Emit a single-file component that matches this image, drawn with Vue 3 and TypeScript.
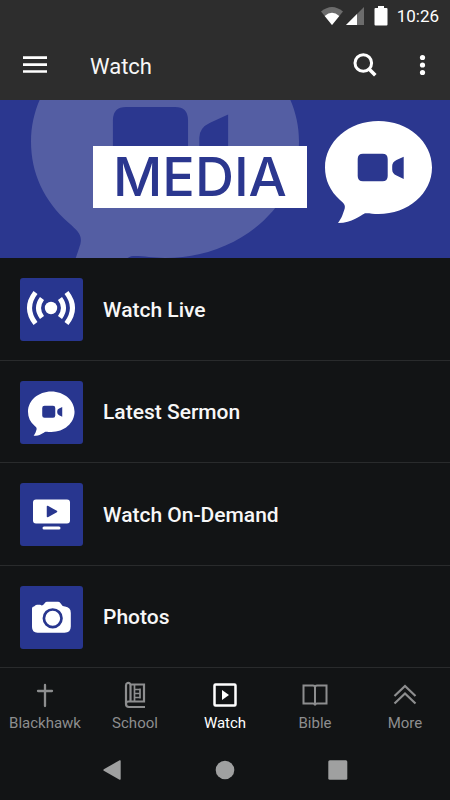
<script setup lang="ts">
import { ref } from 'vue'

type IconName = 'live' | 'sermon' | 'demand' | 'photos'
type TabName = 'Blackhawk' | 'School' | 'Watch' | 'Bible' | 'More'

interface MediaItem {
  label: string
  icon: IconName
}

const items: MediaItem[] = [
  { label: 'Watch Live', icon: 'live' },
  { label: 'Latest Sermon', icon: 'sermon' },
  { label: 'Watch On-Demand', icon: 'demand' },
  { label: 'Photos', icon: 'photos' },
]

const tabs: TabName[] = ['Blackhawk', 'School', 'Watch', 'Bible', 'More']
const activeTab = ref<TabName>('Watch')

// Speech bubble with a camera cut out of it, on a 107 x 102 canvas
const bubble =
  'M53.5 0C83 0 107 20.5 107 46.5S83 93 53.5 93C48 93 44 92 40 92.3C34 95 28 102 13 102C17 97 18.500 91 19.700 87.500C20.500 84 19 82.500 15 79C5 70 0 59 0 46.500C0 20.500 24 0 53.500 0Z' +
  'M38 32.700Q32.700 32.700 32.700 38V55Q32.700 60.300 38 60.300H57.500Q62.700 60.300 62.700 55V38Q62.700 32.700 57.500 32.700Z' +
  'M78.700 35.700L71.500 39Q67.200 41 67.200 45V48.500Q67.200 52.500 71.500 54.500L78.700 58Z'
</script>

<template>
  <div class="screen">
    <header class="header">
      <div class="status">
        <svg class="wifi" width="24" height="20" viewBox="0 0 24 20" aria-hidden="true">
          <path d="M1 5.500Q12-3.500 23 5.500L12 19Z" fill="#6c6c6c" />
          <path d="M4.700 10Q12 3.500 19.300 10L12 19Z" fill="#fff" />
        </svg>
        <svg class="signal" width="18" height="20" viewBox="0 0 18 20" aria-hidden="true">
          <path d="M18 1V19H0Z" fill="#6c6c6c" />
          <path d="M11 8V19H0Z" fill="#fff" />
        </svg>
        <svg class="battery" width="14" height="20" viewBox="0 0 14 20" aria-hidden="true">
          <path d="M4 0H10V2H12.500Q13.500 2 13.500 3V18.500Q13.500 19.500 12.500 19.500H1.500Q.5 19.500 .5 18.500V3Q.5 2 1.500 2H4Z" fill="#fff" />
        </svg>
        <time>10:26</time>
      </div>
      <div class="appbar">
        <button class="icon-button" type="button" aria-label="Menu">
          <svg width="24" height="24" viewBox="0 0 24 24">
            <path d="M0 4.700H24M0 11.600H24M0 18.500H24" stroke="#fff" stroke-width="2.700" />
          </svg>
        </button>
        <h1>Watch</h1>
        <button class="icon-button" type="button" aria-label="Search">
          <svg width="24" height="24" viewBox="0 0 24 24" fill="none" stroke="#fff">
            <circle cx="10.300" cy="10" r="8.300" stroke-width="3" />
            <path d="M16 16L22.300 22.300" stroke-width="3.600" />
          </svg>
        </button>
        <button class="icon-button" type="button" aria-label="More options">
          <svg width="24" height="24" viewBox="0 0 24 24" fill="#fff">
            <circle cx="12.500" cy="4.500" r="2.600" />
            <circle cx="12.500" cy="12" r="2.600" />
            <circle cx="12.500" cy="19.500" r="2.600" />
          </svg>
        </button>
      </div>
    </header>

    <main class="content">
      <section class="banner">
        <svg class="backdrop" viewBox="0 0 107 102" aria-hidden="true">
          <path :d="bubble" fill="#545ea3" fill-rule="evenodd" />
        </svg>
        <h2>MEDIA</h2>
        <svg class="bubble" viewBox="0 0 107 102" aria-hidden="true">
          <path :d="bubble" fill="#fff" fill-rule="evenodd" />
        </svg>
      </section>

      <ul class="list">
        <li v-for="item in items" :key="item.label">
          <a href="#" @click.prevent>
            <span class="tile">
              <svg v-if="item.icon === 'live'" viewBox="0 0 63 63" fill="none" stroke="#fff" stroke-width="5">
                <circle cx="31" cy="30" r="6.200" fill="#fff" stroke="none" />
                <path d="M22 20.500Q15 30 22 39.500M40 20.500Q47 30 40 39.500" />
                <path d="M15.500 14.500Q3.500 30 15.500 45.500M46.500 14.500Q58.500 30 46.500 45.500" />
              </svg>
              <svg v-else-if="item.icon === 'sermon'" viewBox="0 0 63 63">
                <path :d="bubble" transform="translate(8 10.500) scale(.435)" fill="#fff" fill-rule="evenodd" />
              </svg>
              <svg v-else-if="item.icon === 'demand'" viewBox="0 0 63 63">
                <rect x="13" y="16.500" width="37" height="24" rx="3" fill="#fff" />
                <rect x="22.500" y="43.500" width="18" height="3" rx="1.500" fill="#fff" />
                <path d="M27.500 23.500L36.500 28.500L27.500 33.500Z" fill="#28368f" stroke="#28368f" stroke-width="1.500" stroke-linejoin="round" />
              </svg>
              <svg v-else viewBox="0 0 63 63">
                <path d="M12 22.500Q12 20.500 14 20.500L15.500 19.300Q16 18.700 17 18.700H20Q21 18.700 21.600 19.400L22.500 19.300Q24 18.600 25 16.800Q25.800 15.800 27 15.800H38Q39.500 15.800 40.300 17Q42 20.300 45 20.600Q50.800 21.200 50.800 27V40.500Q50.800 46.700 44.500 46.700H17.500Q12 46.700 12 41Z" fill="#fff" />
                <circle cx="32.700" cy="32.300" r="8.800" fill="none" stroke="#28368f" stroke-width="2.700" />
              </svg>
            </span>
            <span>{{ item.label }}</span>
          </a>
        </li>
      </ul>
    </main>

    <nav class="tabs" aria-label="Sections">
      <button
        v-for="tab in tabs"
        :key="tab"
        type="button"
        :class="{ active: tab === activeTab }"
        @click="activeTab = tab"
      >
        <svg width="28" height="28" viewBox="0 0 28 28" fill="none" stroke="currentColor" stroke-width="2" aria-hidden="true">
          <path v-if="tab === 'Blackhawk'" d="M14 4V25M7 10H21" stroke-width="2.300" stroke-linecap="round" />
          <template v-else-if="tab === 'School'">
            <path d="M9.500 3.500V20.500H23V3.500H9.500ZM9.500 3.500Q8.500 1.500 6.500 2Q5 2.500 5 4.500V23Q5 26 8 26H24M9.500 20.500H7.500Q5 20.500 5 23" stroke-width="2.200" />
            <path d="M13.500 4V20M13.500 8.500H19.500M13.500 12.500H19.500M13.500 16.500H19.500M19 7.500V17.500" stroke-width="1.700" />
          </template>
          <template v-else-if="tab === 'Watch'">
            <rect x="3.500" y="3.500" width="21" height="21" rx="1" stroke-width="2.500" />
            <path d="M11 9L18 14L11 19Z" fill="currentColor" stroke="none" />
          </template>
          <path v-else-if="tab === 'Bible'" d="M2.500 4.500H12Q14 4.500 14 6.500Q14 4.500 16 4.500H25.500V22.500H16Q14 22.500 14 24.500Q14 22.500 12 22.500H2.500ZM14 6V23" />
          <path v-else d="M3.500 15L14 5L24.500 15M3.500 22.500L14 12.500L24.500 22.500" stroke-width="2.200" />
        </svg>
        <span>{{ tab }}</span>
      </button>
    </nav>

    <nav class="system" aria-label="System">
      <button type="button" aria-label="Back">
        <svg width="20" height="20" viewBox="0 0 20 20"><path d="M.8 9.200L16.600 .3Q17.700 0 17.700 1V19Q17.700 20 16.600 19.700L.8 10.800Q-.2 10 .8 9.200Z" /></svg>
      </button>
      <button type="button" aria-label="Home">
        <svg width="20" height="20" viewBox="0 0 20 20"><circle cx="10" cy="10" r="9.300" /></svg>
      </button>
      <button type="button" aria-label="Recent apps">
        <svg width="20" height="20" viewBox="0 0 20 20"><rect x=".3" y=".3" width="19" height="19.400" rx="1.500" /></svg>
      </button>
    </nav>
  </div>
</template>

<style>
body {
  background: #121415;
}
</style>

<style scoped>
.screen {
  display: flex;
  flex-direction: column;
  min-height: 100vh;
  background: #121415;
  color: #f7f7f7;
  font-family: Roboto, "Liberation Sans", sans-serif;
}

button {
  border: 0;
  padding: 0;
  background: none;
  color: inherit;
  font: inherit;
  cursor: pointer;
}

svg {
  display: block;
}

.header {
  padding-bottom: 2px;
  background: #2d2d2d;
}

.status {
  display: flex;
  align-items: center;
  justify-content: flex-end;
  height: 32px;
  padding-right: 11px;
  color: #fff;
  font-size: 17px;
  line-height: 20px;
}

.signal {
  margin: 0 10px 0 2px;
}

.battery {
  margin-right: 9px;
}

.appbar {
  display: flex;
  align-items: center;
  height: 66px;
  padding: 0 12px 0 19px;
}

.icon-button {
  display: flex;
  align-items: center;
  justify-content: center;
  width: 32px;
  height: 48px;
}

.appbar h1 {
  flex: 1;
  margin: 0;
  padding: 4px 0 0 39px;
  font-size: 22px;
  font-weight: 400;
  line-height: 28px;
}

.icon-button + .icon-button {
  margin-left: 25px;
}

.content {
  display: flex;
  flex: 1;
  flex-direction: column;
}

.banner {
  position: relative;
  display: flex;
  align-items: flex-start;
  justify-content: flex-end;
  gap: 18px;
  height: 158px;
  box-sizing: border-box;
  padding: 21px 18px 0 0;
  overflow: hidden;
  background: #2b378f;
}

.backdrop {
  position: absolute;
  top: -75px;
  left: 31px;
  width: 268px;
}

.banner h2 {
  position: relative;
  width: 214px;
  margin: 25px 0 0;
  background: #fff;
  color: #2b378f;
  font-family: Inter, "Liberation Sans", sans-serif;
  font-size: 54px;
  font-weight: 500;
  line-height: 62px;
  text-align: center;
}

.bubble {
  position: relative;
  width: 107px;
}

.list {
  display: grid;
  flex: 1;
  grid-auto-rows: 1fr;
  margin: 0;
  padding: 0;
  list-style: none;
}

.list li {
  display: flex;
  border-bottom: 1px solid #292b2c;
}

.list a {
  display: flex;
  flex: 1;
  align-items: center;
  gap: 20px;
  padding: 18px 20px 16px;
  color: inherit;
  font-size: 21px;
  font-weight: 500;
  line-height: 28px;
  text-decoration: none;
}

.tile {
  width: 63px;
  border-radius: 3px;
  background: #28368f;
}

.tabs {
  display: grid;
  grid-template-columns: repeat(5, 1fr);
  height: 72px;
  color: #8d8e8f;
  font-size: 15px;
  line-height: 20px;
}

.tabs button {
  display: flex;
  flex-direction: column;
  align-items: center;
  gap: 4px;
  padding-top: 13px;
}

.tabs .active {
  color: #fff;
}

.system {
  display: grid;
  grid-template-columns: repeat(3, 1fr);
  height: 60px;
  padding: 0 12.5%;
  fill: #9fa0a0;
}

.system button {
  display: flex;
  align-items: center;
  justify-content: center;
}
</style>
